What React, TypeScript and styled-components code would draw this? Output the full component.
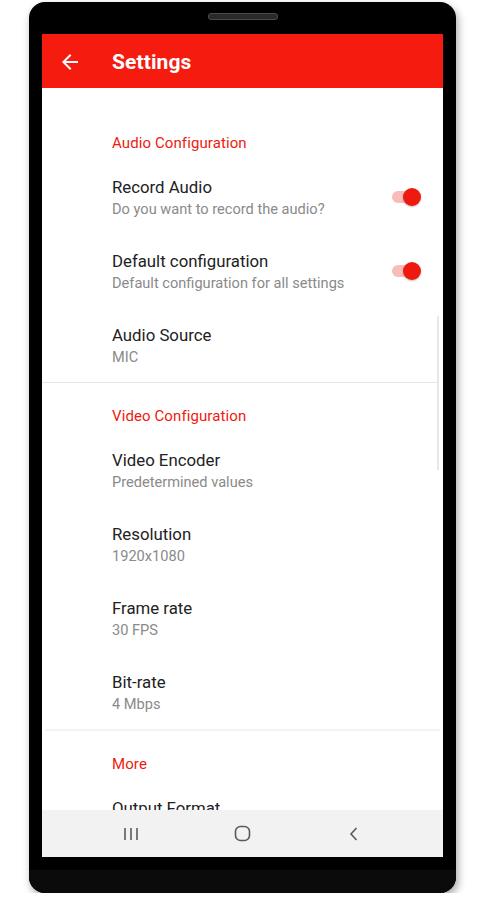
import styled, { createGlobalStyle } from 'styled-components'

const GlobalStyle = createGlobalStyle`
  body {
    margin: 0;
    background: #fff;
    font-family: Roboto, "Noto Sans", sans-serif;
  }
`

const Stage = styled.div`
  padding: 2px 0 0 29px;
`

const Phone = styled.div`
  width: 427px;
  height: 891px;
  background: #000;
  border-radius: 16px;
  display: flex;
  flex-direction: column;
  align-items: center;
  box-shadow: 2px 4px 8px rgba(0, 0, 0, 0.35);
`

const TopBezel = styled.div`
  height: 32px;
  width: 100%;
  display: flex;
  justify-content: center;
  align-items: center;
  padding-bottom: 4px;
  box-sizing: border-box;
`

const Speaker = styled.div`
  width: 68px;
  height: 5px;
  border-radius: 3px;
  background: #2a2a2a;
  border: 1px solid #4a4a4a;
`

const Screen = styled.div`
  position: relative;
  width: 401px;
  height: 823px;
  background: #fff;
  display: flex;
  flex-direction: column;
  overflow: hidden;
`

const BottomBezel = styled.div`
  height: 36px;
  width: 100%;
  display: flex;
  flex-direction: column;
  > div:first-child {
    height: 13px;
  }
  > div:last-child {
    flex: 1;
    background: #0b0b0b;
    border-radius: 0 0 16px 16px;
  }
`

const AppBar = styled.header`
  height: 54px;
  flex-shrink: 0;
  background: #f51b0f;
  display: flex;
  align-items: center;
  padding-left: 16px;
  color: #fff;
`

const BackButton = styled.div`
  width: 24px;
  height: 24px;
  margin-right: 30px;
  margin-top: 2px;
  display: flex;
`

const Title = styled.h1`
  margin: 0;
  margin-top: 2px;
  font-size: 21px;
  font-weight: 700;
  letter-spacing: 0.1px;
`

const Content = styled.div`
  position: relative;
  flex: 1;
  overflow: hidden;
  padding-top: 22px;
`

const ScrollThumb = styled.div`
  position: absolute;
  right: 4px;
  top: 228px;
  width: 2px;
  height: 154px;
  background: #e8e8e8;
`

const SectionHeader = styled.div`
  padding: 23px 21px 7px 70px;
  font-size: 15px;
  line-height: 20px;
  font-weight: 400;
  letter-spacing: 0.1px;
  color: #ef1a10;
`

const Item = styled.div`
  height: 74px;
  box-sizing: border-box;
  padding: 16px 21px 14px 70px;
  display: flex;
  align-items: flex-start;
`

const ItemText = styled.div`
  flex: 1;
  min-width: 0;
`

const ItemTitle = styled.div`
  font-size: 16.8px;
  line-height: 22px;
  color: #222;
`

const ItemSummary = styled.div`
  font-size: 14.6px;
  line-height: 22px;
  color: #8a8a8a;
`

const Divider = styled.div<{ $soft?: boolean }>`
  height: ${(p) => (p.$soft ? '2px' : '1px')};
  margin: ${(p) => (p.$soft ? '0 3px' : '0 5px 0 0')};
  background: ${(p) => (p.$soft ? '#f4f4f4' : '#e4e4e4')};
`

const Switch = styled.div`
  position: relative;
  width: 30px;
  height: 30px;
  margin-top: 6px;
  display: flex;
  align-items: center;
`

const Track = styled.div`
  width: 24px;
  height: 12px;
  border-radius: 6px;
  background: #f9bdb9;
`

const Thumb = styled.div`
  position: absolute;
  right: 1px;
  top: 6px;
  width: 18px;
  height: 18px;
  border-radius: 50%;
  background: #ee1a10;
  box-shadow: 0 1px 2px rgba(0, 0, 0, 0.25);
`

const NavBar = styled.nav`
  height: 47px;
  flex-shrink: 0;
  background: #f2f2f2;
  display: flex;
  justify-content: space-around;
  align-items: center;
  padding: 0 33px;
  color: #5a5a5a;
`

const NavIcon = styled.div`
  width: 112px;
  display: flex;
  justify-content: center;
`

type Setting = { title: string; summary: string; toggle?: boolean }

const audio: Setting[] = [
  { title: 'Record Audio', summary: 'Do you want to record the audio?', toggle: true },
  { title: 'Default configuration', summary: 'Default configuration for all settings', toggle: true },
  { title: 'Audio Source', summary: 'MIC' },
]

const video: Setting[] = [
  { title: 'Video Encoder', summary: 'Predetermined values' },
  { title: 'Resolution', summary: '1920x1080' },
  { title: 'Frame rate', summary: '30 FPS' },
  { title: 'Bit-rate', summary: '4 Mbps' },
]

const more: Setting[] = [{ title: 'Output Format', summary: 'MP4' }]

const Row = ({ title, summary, toggle }: Setting) => (
  <Item>
    <ItemText>
      <ItemTitle>{title}</ItemTitle>
      <ItemSummary>{summary}</ItemSummary>
    </ItemText>
    {toggle && (
      <Switch>
        <Track />
        <Thumb />
      </Switch>
    )}
  </Item>
)

const App = () => {
  return (
    <Stage>
      <GlobalStyle />
      <Phone>
        <TopBezel>
          <Speaker />
        </TopBezel>
        <Screen>
          <AppBar>
            <BackButton>
              <svg width="24" height="24" viewBox="0 0 24 24" fill="#fff">
                <path d="M20 11H7.83l5.59-5.59L12 4l-8 8 8 8 1.41-1.41L7.83 13H20v-2z" />
              </svg>
            </BackButton>
            <Title>Settings</Title>
          </AppBar>
          <Content>
            <ScrollThumb />
            <SectionHeader>Audio Configuration</SectionHeader>
            {audio.map((s) => (
              <Row key={s.title} {...s} />
            ))}
            <Divider />
            <SectionHeader>Video Configuration</SectionHeader>
            {video.map((s) => (
              <Row key={s.title} {...s} />
            ))}
            <Divider $soft />
            <SectionHeader>More</SectionHeader>
            {more.map((s) => (
              <Row key={s.title} {...s} />
            ))}
          </Content>
          <NavBar>
            <NavIcon>
              <svg width="16" height="14" viewBox="0 0 16 14" stroke="currentColor" strokeWidth="1.6">
                <line x1="2" y1="1" x2="2" y2="13" />
                <line x1="8" y1="1" x2="8" y2="13" />
                <line x1="14" y1="1" x2="14" y2="13" />
              </svg>
            </NavIcon>
            <NavIcon>
              <svg width="17" height="17" viewBox="0 0 17 17" fill="none" stroke="currentColor" strokeWidth="1.6">
                <rect x="1.5" y="1.5" width="14" height="14" rx="5" />
              </svg>
            </NavIcon>
            <NavIcon>
              <svg width="10" height="16" viewBox="0 0 10 16" fill="none" stroke="currentColor" strokeWidth="1.6">
                <polyline points="7.5,2 2,8 7.5,14" />
              </svg>
            </NavIcon>
          </NavBar>
        </Screen>
        <BottomBezel>
          <div />
          <div />
        </BottomBezel>
      </Phone>
    </Stage>
  )
}

export default App
